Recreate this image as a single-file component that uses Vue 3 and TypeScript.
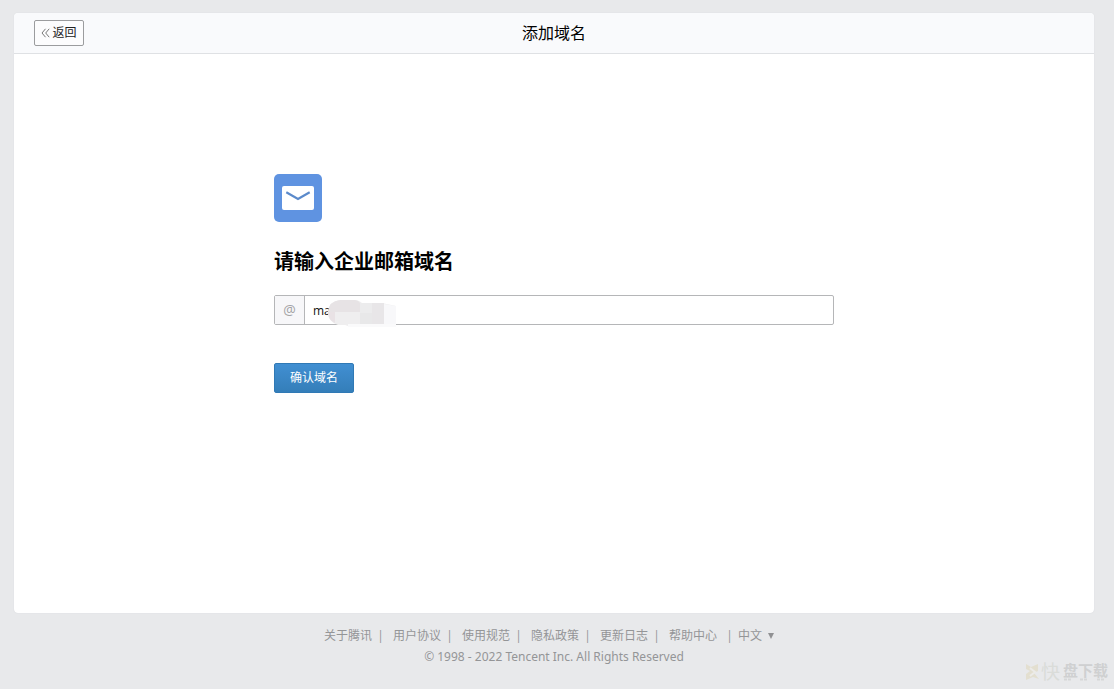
<script setup lang="ts">
import { ref } from 'vue'

const domain = ref<string>('ma')
const links: string[] = ['关于腾讯', '用户协议', '使用规范', '隐私政策', '更新日志', '帮助中心']
</script>

<template>
  <div class="page">
    <main class="card">
      <header class="bar">
        <button type="button" class="back">
          <svg class="chevrons" viewBox="0 0 9 10" aria-hidden="true">
            <path d="M4.5 0.8 L1 5 L4.5 9.2 M8.2 0.8 L4.7 5 L8.2 9.2" />
          </svg>
          <span>返回</span>
        </button>
        <h1 class="title">添加域名</h1>
      </header>

      <form class="content" @submit.prevent>
        <svg class="logo" viewBox="0 0 48 48" aria-hidden="true">
          <rect width="48" height="48" rx="5" fill="#5f93e1" />
          <rect x="8" y="12" width="32" height="24" rx="2" fill="#fff" />
          <path d="M12.3 18.3 L24 25 L35.7 18.3" fill="none" stroke="#5b8acb" stroke-width="2.2" />
        </svg>
        <label class="heading" for="domain">请输入企业邮箱域名</label>
        <div class="field">
          <span class="at">@</span>
          <input id="domain" v-model="domain" class="input" type="text" spellcheck="false" />
          <svg class="mask" viewBox="0 0 70 28" aria-hidden="true">
            <path d="M12 0 H26 Q31 0 34 3 H54 L68 6 V27 H23 L17 25 H10 Q0 22 0 12 Q1 1 12 0Z" fill="#efeeef" />
            <path d="M12 0 H26 Q30 0 32 3 V12 H0 Q1 1 12 0Z" fill="#e7e3e5" />
            <path d="M0 12 H7 V23 Q0 20 0 12Z" fill="#e9e2e5" />
            <rect x="32" y="3" width="12" height="10" fill="#ececed" />
            <rect x="32" y="13" width="12" height="11" fill="#e8e8e9" />
            <rect x="44" y="3" width="12" height="21" fill="#e8e6e8" />
            <path d="M56 4 L68 6 V27 H56Z" fill="#f8f8fa" />
            <rect x="20" y="24" width="48" height="3" fill="#fafafb" />
          </svg>
        </div>
        <button type="submit" class="confirm">确认域名</button>
      </form>
    </main>

    <footer class="footer">
      <nav class="links">
        <template v-for="link in links" :key="link">
          <a href="#">{{ link }}</a>
          <span class="sep">|</span>
        </template>
        <button type="button" class="lang">
          中文
          <svg class="caret" viewBox="0 0 6 6" aria-hidden="true"><path d="M0 0 H6 L3 6Z" /></svg>
        </button>
      </nav>
      <p class="copyright">© 1998 - 2022 Tencent Inc. All Rights Reserved</p>
    </footer>

    <div class="watermark">
      <svg class="mark" viewBox="0 0 16 18" aria-hidden="true">
        <path d="M1 1 L6 4 L13 1 V8 L9 10 L14 16 L8 14 L1 17 V11 L5 8 L1 6Z" fill="#e3dfd0" />
        <path d="M5 5 L10 9 L5 13" fill="none" stroke="#ecebe8" stroke-width="2" />
      </svg>
      <span class="fast">快</span>
      <span class="disk">盘下载</span>
      <svg class="dots" viewBox="0 0 44 3" aria-hidden="true">
        <path d="M1 1.5 H8 M17 1.5 H25 M34 1.5 H42" fill="none" stroke="#d6d7d8" stroke-width="2" stroke-dasharray="3 1" />
      </svg>
    </div>
  </div>
</template>

<style>
body {
  margin: 0;
  background: #e8e9eb;
}
</style>

<style scoped>
.page {
  position: relative;
  box-sizing: border-box;
  display: flex;
  flex-direction: column;
  min-height: 100vh;
  padding: 13px 20px 0 14px;
  background: #e8e9eb;
  color: #000;
  font-family: "Open Sans", "Noto Sans CJK SC", sans-serif;
  font-size: 12px;
}
button,
input {
  font: inherit;
}
.card {
  flex: 1;
  overflow: hidden;
  border-radius: 4px;
  background: #fff;
  box-shadow: 0 0 1px #c8cbd0;
}
.bar {
  box-sizing: border-box;
  display: grid;
  grid-template-columns: 1fr auto 1fr;
  align-items: center;
  height: 41px;
  padding: 0 20px;
  border-bottom: 1px solid #dfe1e4;
  background: #f9fafc;
}
.back {
  box-sizing: border-box;
  display: flex;
  justify-self: start;
  align-items: center;
  justify-content: center;
  gap: 2px;
  width: 50px;
  height: 26px;
  padding: 0;
  border: 1px solid #9b9c9e;
  border-radius: 2px;
  background: #fcfcfd;
  color: #222;
  line-height: 24px;
}
.chevrons {
  width: 9px;
  height: 10px;
  fill: none;
  stroke: #777;
}
.title {
  margin: 0;
  font-size: 16px;
  font-weight: 400;
  line-height: 24px;
}
.content {
  display: flex;
  flex-direction: column;
  align-items: flex-start;
  max-width: 560px;
  margin: 0 auto;
  padding: 120px 0;
}
.logo {
  width: 48px;
  height: 48px;
}
.heading {
  margin-top: 25px;
  font-size: 20px;
  font-weight: 700;
  line-height: 30px;
}
.field {
  position: relative;
  box-sizing: border-box;
  display: flex;
  width: 100%;
  height: 30px;
  margin-top: 18px;
  border: 1px solid #b5b6b8;
  border-radius: 2px;
}
.at {
  box-sizing: border-box;
  width: 30px;
  border-right: 1px solid #b5b6b8;
  background: #f7f7f9;
  color: #a3a3a5;
  font-size: 14px;
  line-height: 28px;
  text-align: center;
}
.input {
  flex: 1;
  min-width: 0;
  padding: 0 8px;
  border: 0;
  outline: 0;
  background: transparent;
  color: #111;
}
.mask {
  position: absolute;
  top: 4px;
  left: 53px;
  width: 70px;
  height: 28px;
  pointer-events: none;
}
.confirm {
  box-sizing: border-box;
  width: 80px;
  height: 30px;
  margin-top: 38px;
  padding: 0;
  border: 1px solid #3079b5;
  border-radius: 2px;
  background: linear-gradient(#418fd2, #347eb9);
  color: #fff;
  line-height: 28px;
}
.footer {
  box-sizing: border-box;
  height: 76px;
  padding-top: 12px;
  color: #949597;
  line-height: 21px;
  text-align: center;
}
.links {
  display: flex;
  justify-content: center;
  padding-right: 10px;
  white-space: nowrap;
}
.links a {
  color: inherit;
  text-decoration: none;
}
.sep {
  width: 21px;
  padding-right: 4px;
  box-sizing: border-box;
}
.sep:last-of-type {
  padding: 0 0 0 4px;
}
.lang {
  display: flex;
  align-items: center;
  gap: 6px;
  padding: 0;
  border: 0;
  background: none;
  color: inherit;
  line-height: 21px;
}
.caret {
  width: 6px;
  height: 6px;
  fill: #909193;
}
.copyright {
  margin: 0;
  font-family: "Noto Sans", sans-serif;
}
.watermark {
  position: absolute;
  right: 6px;
  bottom: 6px;
  display: flex;
  align-items: center;
  color: #cfd0d1;
  line-height: 22px;
}
.mark {
  width: 16px;
  height: 18px;
}
.fast {
  margin-right: 3px;
  color: #dadcd9;
  font-size: 19px;
}
.disk {
  padding-bottom: 4px;
  font-size: 15px;
  font-weight: 700;
  line-height: 18px;
}
.dots {
  position: absolute;
  right: 1px;
  bottom: 2px;
  width: 44px;
  height: 3px;
}
</style>
